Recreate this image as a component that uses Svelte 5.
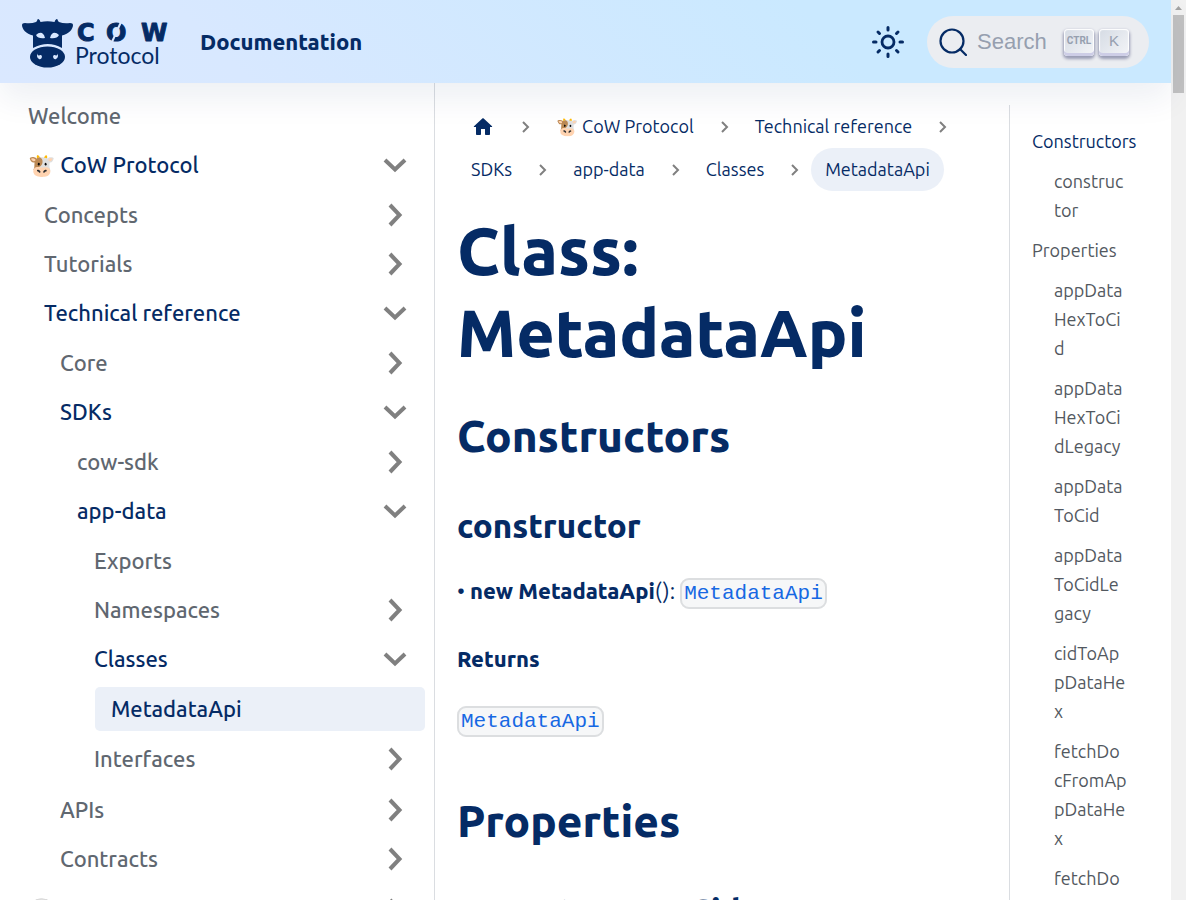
<script>
  const nav = [
    { label: 'Welcome' },
    {
      label: '🐮 CoW Protocol', open: true, items: [
        { label: 'Concepts', items: [] },
        { label: 'Tutorials', items: [] },
        {
          label: 'Technical reference', open: true, items: [
            { label: 'Core', items: [] },
            {
              label: 'SDKs', open: true, items: [
                { label: 'cow-sdk', items: [] },
                {
                  label: 'app-data', open: true, items: [
                    { label: 'Exports' },
                    { label: 'Namespaces', items: [] },
                    { label: 'Classes', open: true, items: [{ label: 'MetadataApi', current: true }] },
                    { label: 'Interfaces', items: [] }
                  ]
                }
              ]
            },
            { label: 'APIs', items: [] },
            { label: 'Contracts', items: [] }
          ]
        }
      ]
    },
    { label: '🥛 CoW AMM', items: [] }
  ];
  const crumbs = ['🐮 CoW Protocol', 'Technical reference', 'SDKs', 'app-data', 'Classes', 'MetadataApi'];
  const toc = [
    { label: 'Constructors', active: true, items: ['constructor'] },
    {
      label: 'Properties',
      items: ['appDataHexToCid', 'appDataHexToCidLegacy', 'appDataToCid', 'appDataToCidLegacy', 'cidToAppDataHex', 'fetchDocFromAppDataHex', 'fetchDocFromAppDataHexLegacy']
    }
  ];
</script>

{#snippet tree(items)}
  {#each items as item}
    <li>
      <a class="item" class:strong={item.open || item.current} class:current={item.current} href="#top">
        <span>{item.label}</span>
        {#if item.items}
          <svg class="caret" class:open={item.open} viewBox="0 0 28 28" aria-hidden="true"><path d="M9 4l9.500 10L9 24" /></svg>
        {/if}
      </a>
      {#if item.open}
        <ul>{@render tree(item.items)}</ul>
      {/if}
    </li>
  {/each}
{/snippet}

{#snippet sep()}
  <svg class="sep" width="12" height="12" viewBox="0 0 12 12" aria-hidden="true"><path d="M3 1l5 5-5 5" /></svg>
{/snippet}

<div class="app">
  <div class="page">
    <header>
      <a class="brand" href="#top" aria-label="CoW Protocol">
        <svg width="150" height="52" viewBox="0 0 150 52">
          <path fill="#052b65" d="M0 6q0-2 3-2 6 1 11-1l1-1q0-2 1.500-2 1.500 1 2 3 7-1.500 14 0 .500-2 2-3 1.500 0 1.500 2l1 1q5 2 11 1 3 0 3 2c0 4-4 9-11 10.500V29q-14-8-29 0V16.500C4 15 0 10 0 6z" />
          <path class="bg" d="M14 16q3-3 6-2 3 2 3 5-7 1-9-3zm23 0q-3-3-6-2-3 2-3 5 7 1 9-3z" />
          <ellipse cx="25.500" cy="38" rx="17.500" ry="10.500" fill="#052b65" />
          <path class="bg" d="M15.500 34.500q0 3 2.500 1.500 2-.500 2 2-1 3-3 2-3-2-1.500-5.500zm20 0q0 3-2.500 1.500-2-.500-2 2 1 3 3 2 3-2 1.500-5.500z" />
          <text class="word" y="22" x="55 84 119">COW</text>
          <path d="M90 23l9-20" stroke="#d9e8ff" stroke-width="2" />
          <text class="sub" x="53" y="45">Protocol</text>
        </svg>
      </a>
      <a class="doc" href="#top">Documentation</a>
      <button class="theme" aria-label="Toggle theme">
        <svg width="34" height="34" viewBox="0 0 34 34" fill="none" stroke="#052b65" stroke-width="3" stroke-linecap="round">
          <circle cx="17" cy="17" r="6" stroke-width="2.800" />
          <path d="M17 2.500v2.500M17 29v2.500M2.500 17H5M29 17h2.500M7 7l1.500 1.500M25.500 25.500L27 27M7 27l1.500-1.500M25.500 8.500L27 7" />
        </svg>
      </button>
      <button class="search">
        <svg width="28" height="28" viewBox="0 0 28 28" fill="none" stroke="#052b65" stroke-width="2.200" stroke-linecap="round">
          <circle cx="13" cy="13" r="11.500" /><path d="M21 21l6 6" />
        </svg>
        <span class="hint">Search</span>
        <kbd class="ctrl">CTRL</kbd><kbd>K</kbd>
      </button>
    </header>

    <div class="body">
      <nav class="side" aria-label="Docs sidebar"><ul>{@render tree(nav)}</ul></nav>

      <main>
        <nav aria-label="Breadcrumbs">
          <ol class="crumbs">
            <li>
              <a href="#top" aria-label="Home">
                <svg width="24" height="24" viewBox="0 0 24 24"><path fill="#052b65" d="M10 19v-5h4v5c0 .550.450 1 1 1h3c.550 0 1-.450 1-1v-7h1.700c.460 0 .680-.570.330-.870L12.670 3.600c-.380-.340-.960-.340-1.340 0l-8.360 7.530c-.340.300-.130.870.330.870H5v7c0 .550.450 1 1 1h3c.550 0 1-.450 1-1z" /></svg>
              </a>
              {@render sep()}
            </li>
            {#each crumbs as c, i}
              <li>
                <a href="#top" class:here={i === crumbs.length - 1}>{c}</a>
                {#if i < crumbs.length - 1}{@render sep()}{/if}
              </li>
            {/each}
          </ol>
        </nav>
        <h1>Class: MetadataApi</h1>
        <h2>Constructors</h2>
        <h3>constructor</h3>
        <p>• <strong>new MetadataApi</strong>(): <a href="#top"><code>MetadataApi</code></a></p>
        <h4>Returns</h4>
        <p><a href="#top"><code>MetadataApi</code></a></p>
        <h2>Properties</h2>
        <h3>appDataHexToCid</h3>
      </main>

      <aside class="toc">
        <ul>
          {#each toc as t}
            <li>
              <a href="#top" class:active={t.active}>{t.label}</a>
              <ul>{#each t.items as s}<li><a href="#top">{s}</a></li>{/each}</ul>
            </li>
          {/each}
        </ul>
      </aside>
    </div>
  </div>
  <div class="scroll" aria-hidden="true">
    <svg width="15" height="15" viewBox="0 0 15 15"><path fill="#a3a3a3" d="M4 10l3.500-4 3.500 4z" /></svg>
    <div class="thumb"></div>
  </div>
</div>

<style>
  * { box-sizing: border-box; }
  .app {
    display: grid;
    grid-template-columns: minmax(0, 1fr) 15px;
    height: 100vh;
    overflow: hidden;
    font: 22px/36px Ubuntu, "Noto Sans", sans-serif;
    color: #052b65;
    background: #fff;
  }
  a { color: inherit; text-decoration: none; }
  button { border: 0; background: none; padding: 0; font: inherit; }
  ul, ol { list-style: none; margin: 0; padding: 0; }
  .page { display: flex; flex-direction: column; min-height: 0; }
  header {
    position: relative;
    z-index: 1;
    flex: none;
    display: flex;
    align-items: center;
    height: 83px;
    padding: 1px 22px 0;
    background: linear-gradient(45deg, #dae8ff 0%, #d8e8ff 20%, #cae9ff 70%, #cae9ff 100%);
    box-shadow: 0 16px 32px rgba(5, 43, 101, 0.07);
  }
  .brand { display: flex; margin: 6px 28px 0 0; }
  .bg { fill: #d9e8ff; }
  .word { font: bold 24px "DejaVu Sans", sans-serif; fill: #052b65; stroke: #052b65; stroke-width: 1; stroke-linejoin: round; }
  .sub { font: 23px Lato, sans-serif; fill: #052b65; }
  .doc { font-weight: 800; }
  .theme { display: flex; margin-left: auto; margin-right: 22px; }
  .search { display: flex; align-items: center; width: 222px; height: 52px; padding: 0 20px 0 12px; border-radius: 26px; background: #ebedf1; }
  .hint { flex: 1; text-align: left; padding-left: 10px; font: 22px/28px "Liberation Sans", sans-serif; color: #969faf; }
  kbd {
    width: 30px;
    height: 27px;
    margin-left: 5px;
    border-radius: 4px;
    font: 15px/24px "Liberation Sans", sans-serif;
    text-align: center;
    color: #969faf;
    background: linear-gradient(-45deg, #f4f5f8, #d5dbe4);
    box-shadow: inset 0 -3px 0 #cdcde6, inset 0 0 1px 1px #fff, 0 2px 3px 1px rgba(30, 35, 90, 0.4);
  }
  .ctrl { font: bold 10px/24px Roboto, sans-serif; }
  .body { flex: 1; min-height: 0; display: grid; grid-template-columns: 435px minmax(0, 1fr) 162px; }
  .side { overflow: hidden; border-right: 1px solid #dadde1; padding: 11px 9px 0 12px; font-weight: 500; color: #606770; }
  .side ul ul { padding: 1px 0 1px 16px; }
  .side ul ul ul ul { padding-left: 17px; }
  .side li + li, .side ul ul { margin-top: 5px; }
  .item { display: flex; align-items: center; justify-content: space-between; height: 44px; padding: 0 16px; border-radius: 5px; }
  .strong { color: #052b65; }
  .current { background: #ebf0f8; }
  .caret { width: 28px; height: 28px; fill: none; stroke: #808080; stroke-width: 4; }
  .open { transform: rotate(90deg); }
  main { overflow: hidden; padding: 22px 22px 0; }
  .crumbs { display: flex; flex-wrap: wrap; font-size: 18px; line-height: 27px; }
  .crumbs li { display: flex; align-items: center; }
  .crumbs a { display: flex; padding: 8px 14px; border-radius: 22px; }
  .sep { margin: 0 10px 0 11px; fill: none; stroke: #808080; stroke-width: 2; }
  .here { background: #ebf0f8; }
  h1, h2, h3, h4, strong { font-weight: 800; }
  p { margin: 0; }
  h1 { font-size: 66px; line-height: 82px; margin: 18px 0 35px; }
  h2 { font-size: 44px; line-height: 55px; margin: 0; }
  h3 { font-size: 33px; line-height: 41px; margin: 42px 0 27px; }
  h4 { font-size: 22px; line-height: 28px; margin: 36px 0 28px; }
  p + h2 { margin-top: 56px; }
  code { font: 21px/27px "Liberation Mono", monospace; color: #1668e3; background: #f6f7f8; border: 2px solid #dcdee0; border-radius: 9px; padding: 2px; }
  .toc { overflow: hidden; margin-top: 22px; padding: 18px 22px 0; border-left: 1px solid #dadde1; color: #525860; font-size: 18px; line-height: 29px; }
  .toc ul ul { padding: 0 22px; }
  .toc li { margin: 11px 0; }
  .toc > ul > li:first-child { margin-top: 4px; }
  .toc a { display: block; overflow-wrap: anywhere; }
  .toc > ul > li > a { white-space: nowrap; }
  .toc .active { color: #052b65; }
  .scroll { background: #f1f1f1; }
  .scroll svg { display: block; }
  .thumb { width: 11px; height: 78px; margin: 0 auto; background: #c1c1c1; }
</style>
